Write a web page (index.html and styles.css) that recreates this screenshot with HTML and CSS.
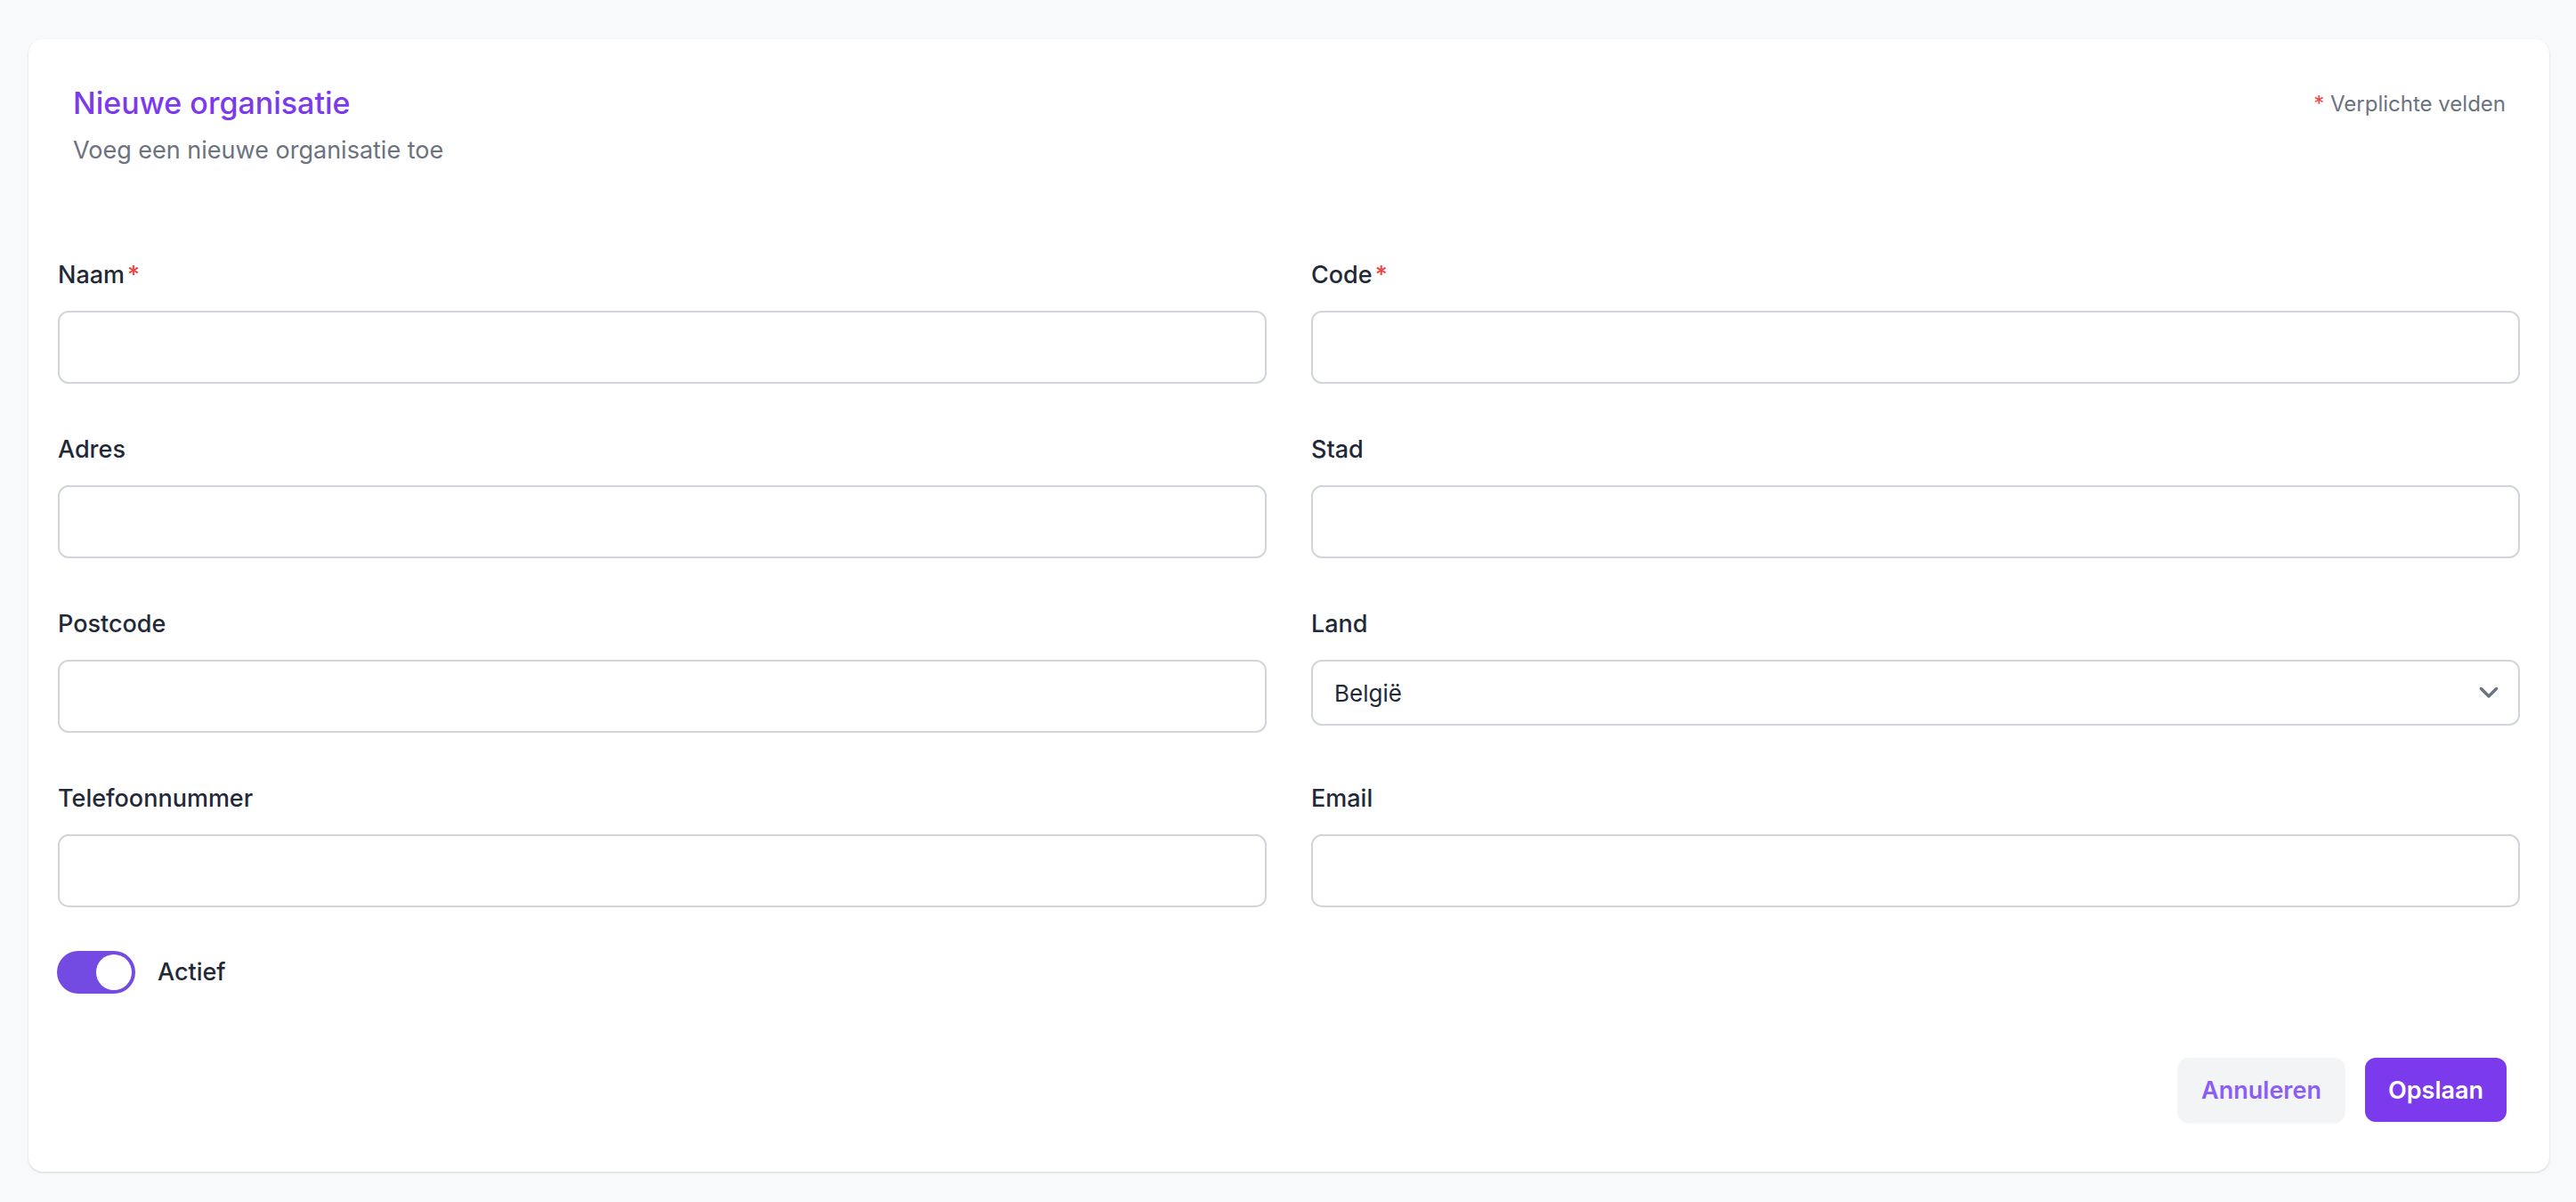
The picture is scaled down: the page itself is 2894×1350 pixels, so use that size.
FILE: index.html
```html
<!DOCTYPE html>
<html lang="nl">
<head>
  <meta charset="UTF-8" />
  <meta name="viewport" content="width=device-width, initial-scale=1" />
  <title>Nieuwe organisatie</title>
  <link rel="stylesheet" href="styles.css">
</head>
<body>
<div class="page">
  <form class="card">
    <div class="card-header">
      <div>
        <h1 class="title">Nieuwe organisatie</h1>
        <p class="subtitle">Voeg een nieuwe organisatie toe</p>
      </div>
      <p class="required-note"><span class="req">*</span> Verplichte velden</p>
    </div>

    <div class="fields">
      <div class="field">
        <label for="naam">Naam<span class="req">*</span></label>
        <input id="naam" type="text" />
      </div>
      <div class="field">
        <label for="code">Code<span class="req">*</span></label>
        <input id="code" type="text" />
      </div>
      <div class="field">
        <label for="adres">Adres</label>
        <input id="adres" type="text" />
      </div>
      <div class="field">
        <label for="stad">Stad</label>
        <input id="stad" type="text" />
      </div>
      <div class="field">
        <label for="postcode">Postcode</label>
        <input id="postcode" type="text" />
      </div>
      <div class="field">
        <label for="land">Land</label>
        <div class="select-wrap">
          <select id="land">
            <option>België</option>
            <option>Nederland</option>
            <option>Frankrijk</option>
            <option>Duitsland</option>
          </select>
          <svg class="chevron" width="22" height="14" viewBox="0 0 22 14" fill="none">
            <polyline points="2.5,2.5 11,11 19.5,2.5" stroke="#6b7280" stroke-width="3.4" stroke-linecap="round" stroke-linejoin="round"/>
          </svg>
        </div>
      </div>
      <div class="field">
        <label for="telefoon">Telefoonnummer</label>
        <input id="telefoon" type="text" />
      </div>
      <div class="field">
        <label for="email">Email</label>
        <input id="email" type="email" />
      </div>
    </div>

    <div class="toggle-row">
      <span class="toggle"><span class="knob"></span></span>
      <span class="toggle-label">Actief</span>
    </div>

    <div class="actions">
      <button type="button" class="btn btn-secondary">Annuleren</button>
      <button type="submit" class="btn btn-primary">Opslaan</button>
    </div>
  </form>
</div>
</body>
</html>
```

FILE: styles.css
```css
body, html {
  margin: 0; padding: 0;
  background: #f8f9fb;
  font-family: Inter, "Noto Sans", "Liberation Sans", sans-serif;
  color: #1f2937;
}
.page {
  padding: 44px 30px 34px 32px;
}
.card {
  background: #fff;
  border-radius: 16px;
  box-shadow: 0 1px 3px rgba(0,0,0,0.10), 0 1px 2px rgba(0,0,0,0.05);
  padding: 47px 33px 56px;
}
.card-header {
  display: flex;
  justify-content: space-between;
  align-items: flex-start;
  padding: 0 16px 0 17px;
}
.title {
  margin: 0;
  font-size: 34px;
  line-height: 50px;
  font-weight: 500;
  color: #7c3aed;
}
.subtitle {
  margin: 10px 0 0;
  font-size: 27px;
  line-height: 36px;
  color: #6b7280;
}
.required-note {
  margin: 9px 0 0;
  font-size: 24px;
  line-height: 34px;
  color: #6b7280;
}
.req {
  color: #ef4444;
  margin-left: 3px;
}
.required-note .req {
  margin-left: 0;
}

.fields {
  display: grid;
  grid-template-columns: 1fr 1fr;
  column-gap: 50px;
  row-gap: 56px;
  margin-top: 104px;
}
.field {
  display: flex;
  flex-direction: column;
}
.field label {
  font-size: 27px;
  line-height: 36px;
  font-weight: 450;
  color: #1f2937;
  margin-bottom: 22px;
}
.field input {
  box-sizing: border-box;
  height: 82px;
  border: 2px solid #d1d5db;
  border-radius: 12px;
  padding: 0 24px;
  font: inherit;
  font-size: 26px;
  background: #fff;
}
.select-wrap {
  position: relative;
}
.select-wrap select {
  box-sizing: border-box;
  width: 100%;
  height: 74px;
  border: 2px solid #d1d5db;
  border-radius: 12px;
  padding: 0 24px;
  font-family: inherit;
  font-size: 26px;
  color: #1f2937;
  background: #fff;
  appearance: none;
  -webkit-appearance: none;
}
.chevron {
  position: absolute;
  right: 24px;
  top: 30px;
  pointer-events: none;
}

.toggle-row {
  display: flex;
  align-items: center;
  gap: 25px;
  margin-top: 49px;
  margin-left: -1px;
}
.toggle {
  box-sizing: border-box;
  width: 88px;
  height: 48px;
  border-radius: 24px;
  background: #734be3;
  padding: 4px;
  display: flex;
  justify-content: flex-end;
}
.knob {
  width: 40px;
  height: 40px;
  border-radius: 50%;
  background: #fff;
}
.toggle-label {
  font-size: 27px;
  line-height: 36px;
  font-weight: 450;
  color: #1f2937;
}

.actions {
  display: flex;
  justify-content: flex-end;
  gap: 23px;
  margin-top: 72px;
  padding-right: 15px;
}
.btn {
  height: 72px;
  padding: 0 26px;
  border: none;
  border-radius: 12px;
  font-family: inherit;
  font-size: 27px;
  font-weight: 600;
  cursor: pointer;
}
.btn-secondary {
  background: #f3f4f6;
  color: #8b5cf6;
  box-shadow: 0 1px 3px rgba(0,0,0,0.08);
}
.btn-primary {
  background: #7c3aed;
  color: #fff;
  box-shadow: 0 1px 2px rgba(0,0,0,0.05);
}
```
